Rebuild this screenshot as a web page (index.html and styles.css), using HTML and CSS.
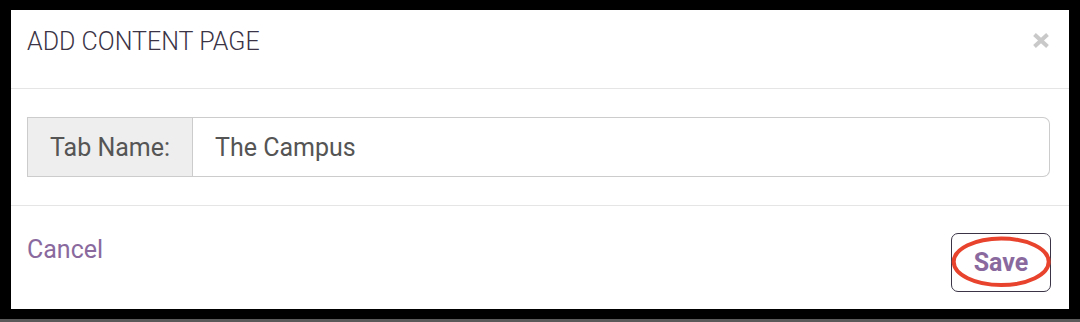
FILE: index.html
```html
<!DOCTYPE html>
<html lang="en">
<head>
<meta charset="utf-8">
<title>Add Content Page</title>
<link rel="stylesheet" href="styles.css">
</head>
<body>
<div class="screen">
  <div class="modal">
    <div class="modal-header">
      <h4 class="modal-title">ADD CONTENT PAGE</h4>
      <button class="close" type="button" aria-label="Close">
        <svg width="18" height="17" viewBox="0 0 18 17"><path d="M2.5 2.5 L15.5 14.5 M15.5 2.5 L2.5 14.5" stroke="#c9c9c9" stroke-width="4" stroke-linecap="butt" fill="none"/></svg>
      </button>
    </div>
    <div class="modal-body">
      <div class="input-group">
        <span class="addon">Tab Name:</span>
        <input class="field" type="text" value="The Campus">
      </div>
    </div>
    <div class="modal-footer">
      <a class="cancel" href="#">Cancel</a>
      <button class="save" type="button">Save
        <svg class="ring" width="100" height="59" viewBox="0 0 100 59"><ellipse cx="50.2" cy="28.8" rx="47.5" ry="23.3" fill="none" stroke="#e8432d" stroke-width="4"/></svg>
      </button>
    </div>
  </div>
</div>
</body>
</html>
```
FILE: styles.css
```css
html {
  background: #5a5a5a;
  height: 322px;
  overflow: hidden;
}
body {
  margin: 0;
  font-family: Roboto, "Liberation Sans", Arial, sans-serif;
}
.screen {
  background: #000;
  padding: 10px 11px;
  height: 299px;
}
.modal {
  background: #fff;
  height: 299px;
  display: flex;
  flex-direction: column;
}
.modal-header {
  box-sizing: border-box;
  height: 79px;
  padding: 17px 19px 0 16px;
  border-bottom: 1px solid #e5e5e5;
  display: flex;
  justify-content: space-between;
  align-items: flex-start;
}
.modal-title {
  margin: 0;
  font-size: 25px;
  font-weight: 300;
  line-height: 29px;
  color: #3b3446;
}
.close {
  background: none;
  border: 0;
  padding: 0;
  margin-top: 5px;
  width: 18px;
  height: 17px;
  display: block;
}
.close svg { display: block; }
.modal-body {
  padding: 28px 19px 28px 16px;
  border-bottom: 1px solid #e5e5e5;
}
.input-group {
  display: flex;
  height: 60px;
  box-sizing: border-box;
}
.addon {
  box-sizing: border-box;
  width: 166px;
  background: #eee;
  border: 1px solid #ccc;
  display: flex;
  align-items: center;
  padding-left: 22px;
  font-size: 25px;
  color: #555;
}
.field {
  flex: 1;
  box-sizing: border-box;
  height: 60px;
  border: 1px solid #ccc;
  border-left: 0;
  border-radius: 0 7px 7px 0;
  padding: 0 0 0 22px;
  font-family: Roboto, "Liberation Sans", Arial, sans-serif;
  font-size: 25px;
  color: #555;
  outline: none;
  margin: 0;
}
.modal-footer {
  flex: 1;
  padding: 27px 18px 0 16px;
  display: flex;
  justify-content: space-between;
  align-items: flex-start;
}
.cancel {
  margin-top: 2px;
  font-size: 25px;
  line-height: 29px;
  color: #8a6a9e;
  text-decoration: none;
}
.save {
  position: relative;
  box-sizing: border-box;
  width: 100px;
  height: 59px;
  background: #fff;
  border: 1px solid #3b3446;
  border-radius: 7px;
  padding: 0;
  font-family: Roboto, "Liberation Sans", Arial, sans-serif;
  font-size: 25px;
  font-weight: 700;
  color: #8a6a9e;
}
.ring {
  position: absolute;
  left: -1px;
  top: -1px;
}
```
